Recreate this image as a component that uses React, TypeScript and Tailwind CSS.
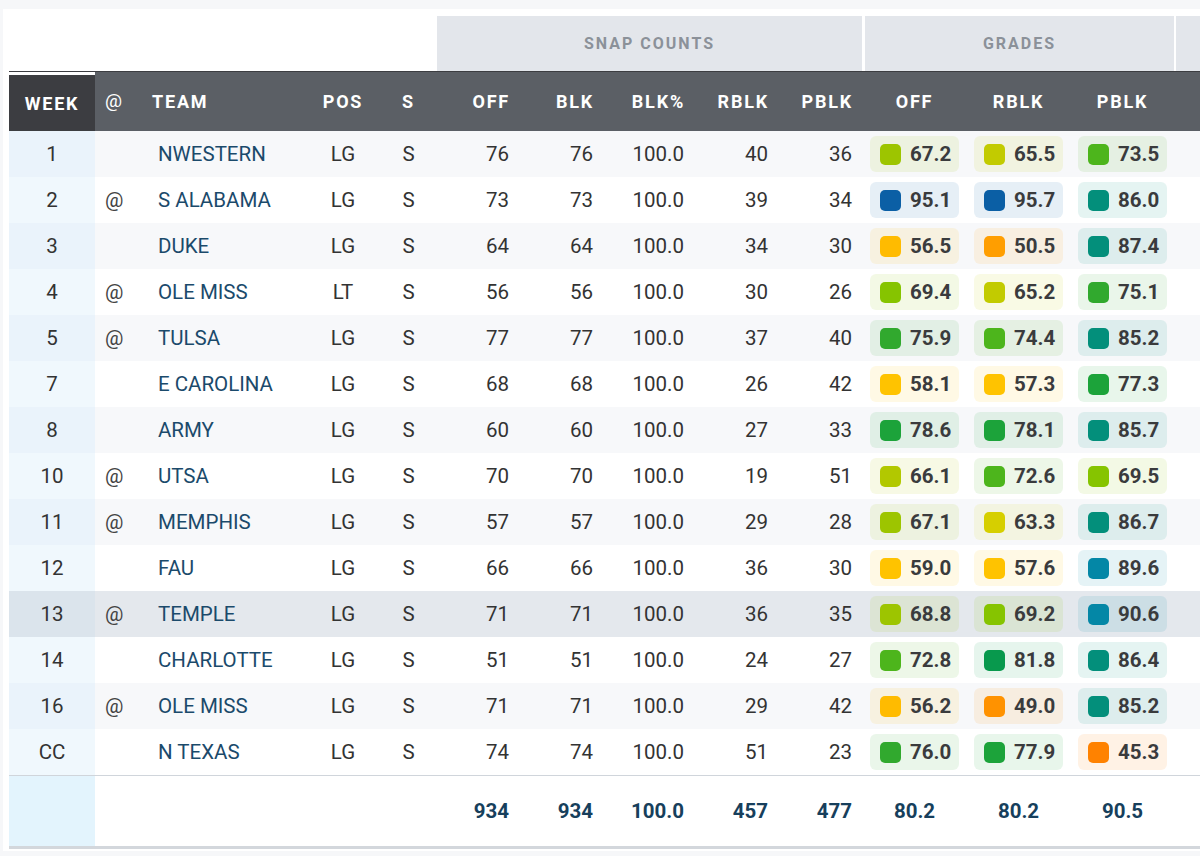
import clsx from "clsx";

type Row = {
  wk: string;
  at: boolean;
  team: string;
  pos: string;
  off: number;
  blk: number;
  rblk: number;
  pblk: number;
  grades: number[];
};

const rows: Row[] = [
  { wk: "1", at: false, team: "NWESTERN", pos: "LG", off: 76, blk: 76, rblk: 40, pblk: 36, grades: [67.2, 65.5, 73.5] },
  { wk: "2", at: true, team: "S ALABAMA", pos: "LG", off: 73, blk: 73, rblk: 39, pblk: 34, grades: [95.1, 95.7, 86.0] },
  { wk: "3", at: false, team: "DUKE", pos: "LG", off: 64, blk: 64, rblk: 34, pblk: 30, grades: [56.5, 50.5, 87.4] },
  { wk: "4", at: true, team: "OLE MISS", pos: "LT", off: 56, blk: 56, rblk: 30, pblk: 26, grades: [69.4, 65.2, 75.1] },
  { wk: "5", at: true, team: "TULSA", pos: "LG", off: 77, blk: 77, rblk: 37, pblk: 40, grades: [75.9, 74.4, 85.2] },
  { wk: "7", at: false, team: "E CAROLINA", pos: "LG", off: 68, blk: 68, rblk: 26, pblk: 42, grades: [58.1, 57.3, 77.3] },
  { wk: "8", at: false, team: "ARMY", pos: "LG", off: 60, blk: 60, rblk: 27, pblk: 33, grades: [78.6, 78.1, 85.7] },
  { wk: "10", at: true, team: "UTSA", pos: "LG", off: 70, blk: 70, rblk: 19, pblk: 51, grades: [66.1, 72.6, 69.5] },
  { wk: "11", at: true, team: "MEMPHIS", pos: "LG", off: 57, blk: 57, rblk: 29, pblk: 28, grades: [67.1, 63.3, 86.7] },
  { wk: "12", at: false, team: "FAU", pos: "LG", off: 66, blk: 66, rblk: 36, pblk: 30, grades: [59.0, 57.6, 89.6] },
  { wk: "13", at: true, team: "TEMPLE", pos: "LG", off: 71, blk: 71, rblk: 36, pblk: 35, grades: [68.8, 69.2, 90.6] },
  { wk: "14", at: false, team: "CHARLOTTE", pos: "LG", off: 51, blk: 51, rblk: 24, pblk: 27, grades: [72.8, 81.8, 86.4] },
  { wk: "16", at: true, team: "OLE MISS", pos: "LG", off: 71, blk: 71, rblk: 29, pblk: 42, grades: [56.2, 49.0, 85.2] },
  { wk: "CC", at: false, team: "N TEXAS", pos: "LG", off: 74, blk: 74, rblk: 51, pblk: 23, grades: [76.0, 77.9, 45.3] },
];

// swatch colour + tinted badge background for a grade
function gradeColor(g: number) {
  if (g >= 92) return ["bg-[#0b5fa5]", "bg-[#0b5fa5]/10"];
  if (g >= 89) return ["bg-[#0487a6]", "bg-[#0487a6]/10"];
  if (g >= 84) return ["bg-[#038f7b]", "bg-[#038f7b]/10"];
  if (g >= 80) return ["bg-[#08994d]", "bg-[#08994d]/10"];
  if (g >= 77) return ["bg-[#1ca33a]", "bg-[#1ca33a]/10"];
  if (g >= 75) return ["bg-[#31a92e]", "bg-[#31a92e]/10"];
  if (g >= 72) return ["bg-[#4db51c]", "bg-[#4db51c]/10"];
  if (g >= 69) return ["bg-[#86c400]", "bg-[#86c400]/10"];
  if (g >= 67) return ["bg-[#9dc500]", "bg-[#9dc500]/10"];
  if (g >= 66) return ["bg-[#b2c800]", "bg-[#b2c800]/10"];
  if (g >= 64) return ["bg-[#c2cb00]", "bg-[#c2cb00]/10"];
  if (g >= 60) return ["bg-[#d6cf00]", "bg-[#d6cf00]/10"];
  if (g >= 57) return ["bg-[#ffc300]", "bg-[#ffc300]/10"];
  if (g >= 55) return ["bg-[#ffbb00]", "bg-[#ffbb00]/10"];
  if (g >= 50) return ["bg-[#ff9e00]", "bg-[#ff9e00]/10"];
  if (g >= 47) return ["bg-[#ff9200]", "bg-[#ff9200]/10"];
  return ["bg-[#ff8200]", "bg-[#ff8200]/10"];
}

function Grade({ value }: { value: number }) {
  const [sw, tint] = gradeColor(value);
  return (
    <div className="w-[104px] shrink-0 pl-[6px] flex items-center">
      <div className={clsx("w-[89px] h-[36px] rounded-md flex items-center pl-[10px] gap-[9px]", tint)}>
        <span className={clsx("w-[21px] h-[21px] rounded-[5px]", sw)} />
        <span className="text-[20.5px] font-bold text-[#3a3b3d]">{value.toFixed(1)}</span>
      </div>
    </div>
  );
}

export default function App() {
  return (
    <div className="min-h-screen bg-[#f6f7f9] pt-[9px] pl-[3px] overflow-hidden font-['Roboto',sans-serif]">
      <div className="bg-white pt-[7px] pl-[6px] w-[1400px]">
        {/* Group headers */}
        <div className="flex h-[55px]">
          <div className="w-[427px] shrink-0" />
          <div className="w-[428px] shrink-0 pl-[1px] pr-[2px]">
            <div className="h-full bg-[#e3e6eb] flex items-center justify-center text-[16px] font-bold tracking-[2px] text-[#8b9199]">
              SNAP COUNTS
            </div>
          </div>
          <div className="w-[312px] shrink-0 pl-[1px] pr-[2px]">
            <div className="h-full bg-[#e3e6eb] flex items-center justify-center text-[16px] font-bold tracking-[2px] text-[#8b9199]">
              GRADES
            </div>
          </div>
          <div className="w-[300px] shrink-0 bg-[#e3e6eb]" />
        </div>

        {/* Column headers */}
        <div className="flex h-[60px] border-t border-[#3c3d41] bg-[#5b5f65] text-white text-[18px] font-bold tracking-[1.8px]">
          <div className="w-[86px] shrink-0 bg-[#3c3d41] border-t-[3px] border-white flex items-center justify-center">WEEK</div>
          <div className="w-[45px] shrink-0 pl-[10px] flex items-center font-normal tracking-normal text-[19px]">@</div>
          <div className="w-[165px] shrink-0 pl-[12px] flex items-center">TEAM</div>
          <div className="w-[76px] shrink-0 flex items-center justify-center">POS</div>
          <div className="w-[55px] shrink-0 flex items-center justify-center">S</div>
          <div className="w-[85px] shrink-0 pr-[11px] flex items-center justify-end">OFF</div>
          <div className="w-[84px] shrink-0 pr-[11px] flex items-center justify-end">BLK</div>
          <div className="w-[91px] shrink-0 pr-[11px] flex items-center justify-end">BLK%</div>
          <div className="w-[84px] shrink-0 pr-[11px] flex items-center justify-end">RBLK</div>
          <div className="w-[84px] shrink-0 pr-[11px] flex items-center justify-end">PBLK</div>
          <div className="w-[104px] shrink-0 pl-[6px] flex items-center"><span className="w-[89px] text-center">OFF</span></div>
          <div className="w-[104px] shrink-0 pl-[6px] flex items-center"><span className="w-[89px] text-center">RBLK</span></div>
          <div className="w-[104px] shrink-0 pl-[6px] flex items-center"><span className="w-[89px] text-center">PBLK</span></div>
          <div className="flex-1" />
        </div>

        {/* Game rows */}
        {rows.map((r, i) => {
          const hl = r.wk === "13";
          const gray = i % 2 === 0;
          return (
            <div
              key={i}
              className={clsx(
                "flex h-[46px] text-[20.5px] text-[#333]",
                hl ? "bg-[#e4e8ed]" : gray ? "bg-[#f7f8fa]" : "bg-white"
              )}
            >
              <div
                className={clsx(
                  "w-[86px] shrink-0 flex items-center justify-center",
                  hl ? "bg-[#dbe4ec]" : gray ? "bg-[#eaf3fb]" : "bg-[#f0f8fd]"
                )}
              >
                {r.wk}
              </div>
              <div className="w-[45px] shrink-0 pl-[10px] flex items-center text-[#444]">{r.at ? "@" : ""}</div>
              <div className="w-[165px] shrink-0 pl-[18px] flex items-center text-[#1b4a6b]">{r.team}</div>
              <div className="w-[76px] shrink-0 flex items-center justify-center">{r.pos}</div>
              <div className="w-[55px] shrink-0 flex items-center justify-center">S</div>
              <div className="w-[85px] shrink-0 pr-[12px] flex items-center justify-end">{r.off}</div>
              <div className="w-[84px] shrink-0 pr-[12px] flex items-center justify-end">{r.blk}</div>
              <div className="w-[91px] shrink-0 pr-[12px] flex items-center justify-end">100.0</div>
              <div className="w-[84px] shrink-0 pr-[12px] flex items-center justify-end">{r.rblk}</div>
              <div className="w-[84px] shrink-0 pr-[12px] flex items-center justify-end">{r.pblk}</div>
              {r.grades.map((g, j) => (
                <Grade key={j} value={g} />
              ))}
              <div className="flex-1" />
            </div>
          );
        })}

        {/* Totals */}
        <div className="flex h-[74px] border-t border-[#d0d5db] border-b-[3px] border-b-[#d3d7dc] text-[20.5px] font-bold text-[#173f5c]">
          <div className="w-[86px] shrink-0 bg-[#e3f4fd]" />
          <div className="w-[45px] shrink-0" />
          <div className="w-[165px] shrink-0" />
          <div className="w-[76px] shrink-0" />
          <div className="w-[55px] shrink-0" />
          <div className="w-[85px] shrink-0 pr-[12px] flex items-center justify-end">934</div>
          <div className="w-[84px] shrink-0 pr-[12px] flex items-center justify-end">934</div>
          <div className="w-[91px] shrink-0 pr-[12px] flex items-center justify-end">100.0</div>
          <div className="w-[84px] shrink-0 pr-[12px] flex items-center justify-end">457</div>
          <div className="w-[84px] shrink-0 pr-[12px] flex items-center justify-end">477</div>
          <div className="w-[104px] shrink-0 pl-[6px] flex items-center"><span className="w-[89px] text-center">80.2</span></div>
          <div className="w-[104px] shrink-0 pl-[6px] flex items-center"><span className="w-[89px] text-center">80.2</span></div>
          <div className="w-[104px] shrink-0 pl-[6px] flex items-center"><span className="w-[89px] text-center">90.5</span></div>
          <div className="flex-1" />
        </div>
        <div className="h-[2px]" />
      </div>
    </div>
  );
}
